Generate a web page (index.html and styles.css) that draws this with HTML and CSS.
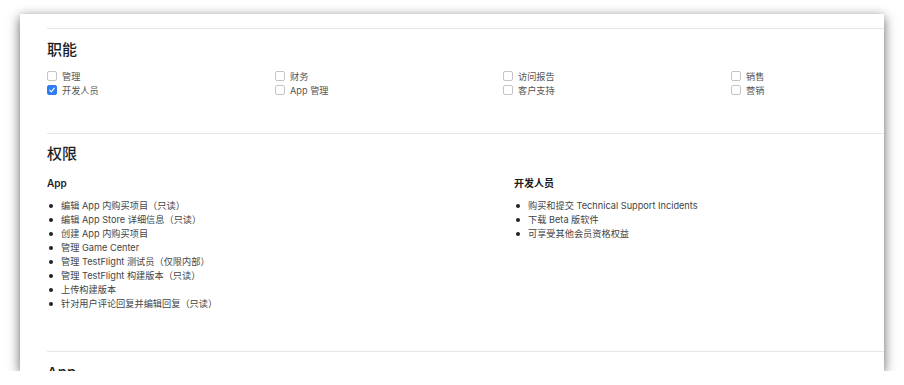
FILE: index.html
```html
<!DOCTYPE html>
<html lang="zh-CN">
<head>
    <meta charset="UTF-8">
    <meta name="viewport" content="width=device-width, initial-scale=1.0">
    <title>用户角色</title>
    <link rel="stylesheet" href="styles.css">
</head>
<body>
    <div class="window">
        <div class="page">
            <section class="section">
                <h2>职能</h2>
                <div class="roles">
                    <label class="role"><span class="box"></span>管理</label>
                    <label class="role"><span class="box"></span>财务</label>
                    <label class="role"><span class="box"></span>访问报告</label>
                    <label class="role"><span class="box"></span>销售</label>
                    <label class="role"><span class="box checked"><svg viewBox="0 0 10 10" width="8" height="8"><path d="M2.2 5.2 L4.2 7.3 L7.9 2.6" fill="none" stroke="#fff" stroke-width="1.4" stroke-linecap="round" stroke-linejoin="round"/></svg></span>开发人员</label>
                    <label class="role"><span class="box"></span>App 管理</label>
                    <label class="role"><span class="box"></span>客户支持</label>
                    <label class="role"><span class="box"></span>营销</label>
                </div>
            </section>

            <section class="section perms-section">
                <h2>权限</h2>
                <div class="perms">
                    <div class="perm-group">
                        <h3>App</h3>
                        <ul>
                            <li>编辑 App 内购买项目（只读）</li>
                            <li>编辑 App Store 详细信息（只读）</li>
                            <li>创建 App 内购买项目</li>
                            <li>管理 Game Center</li>
                            <li>管理 TestFlight 测试员（仅限内部）</li>
                            <li>管理 TestFlight 构建版本（只读）</li>
                            <li>上传构建版本</li>
                            <li>针对用户评论回复并编辑回复（只读）</li>
                        </ul>
                    </div>
                    <div class="perm-group">
                        <h3>开发人员</h3>
                        <ul>
                            <li>购买和提交 Technical Support Incidents</li>
                            <li>下载 Beta 版软件</li>
                            <li>可享受其他会员资格权益</li>
                        </ul>
                    </div>
                </div>
            </section>

            <section class="section">
                <h2>App</h2>
            </section>
        </div>
    </div>
</body>
</html>
```

FILE: styles.css
```css
body {
    margin: 0;
    background: #fff;
    font-family: "Inter", "Noto Sans CJK SC", sans-serif;
    color: #1d1d1f;
}
.window {
    margin: 14px 0 0 20px;
    width: 864px;
    height: 357px;
    background: #fff;
    overflow: hidden;
    box-shadow: 0 3px 11px rgba(0,0,0,0.62);
}
.page {
    margin-left: 27px;
    width: 960px;
}
.section {
    border-top: 1px solid #e6e6e6;
    padding-top: 10px;
}
.window .section:first-child {
    margin-top: 14px;
    height: 94px;
}
.perms-section {
    padding-top: 9px;
    height: 208px;
}
h2 {
    margin: 0;
    font-size: 15px;
    line-height: 21px;
    font-weight: 500;
}
.roles {
    margin-top: 9px;
    display: grid;
    grid-template-columns: repeat(4, 228px);
}
.role {
    display: flex;
    align-items: center;
    height: 14px;
    font-size: 9.2px;
    color: #555;
}
.box {
    width: 8px;
    height: 8px;
    border: 1px solid #c4c4c4;
    border-radius: 2px;
    margin-right: 5px;
    display: flex;
    align-items: center;
    justify-content: center;
    box-sizing: content-box;
}
.box.checked {
    background: #2f7cf6;
    border-color: #2f7cf6;
}
.perms {
    margin-top: 12px;
    display: grid;
    grid-template-columns: repeat(2, 467px);
}
h3 {
    margin: 0;
    font-size: 10px;
    line-height: 14px;
    font-weight: 600;
}
ul {
    list-style: none;
    margin: 9px 0 0;
    padding: 0;
}
li {
    position: relative;
    padding-left: 14px;
    font-size: 9.2px;
    line-height: 14px;
    color: #444;
}
li::before {
    content: "";
    position: absolute;
    left: 2px;
    top: 5px;
    width: 4px;
    height: 4px;
    border-radius: 50%;
    background: #222;
}
```
